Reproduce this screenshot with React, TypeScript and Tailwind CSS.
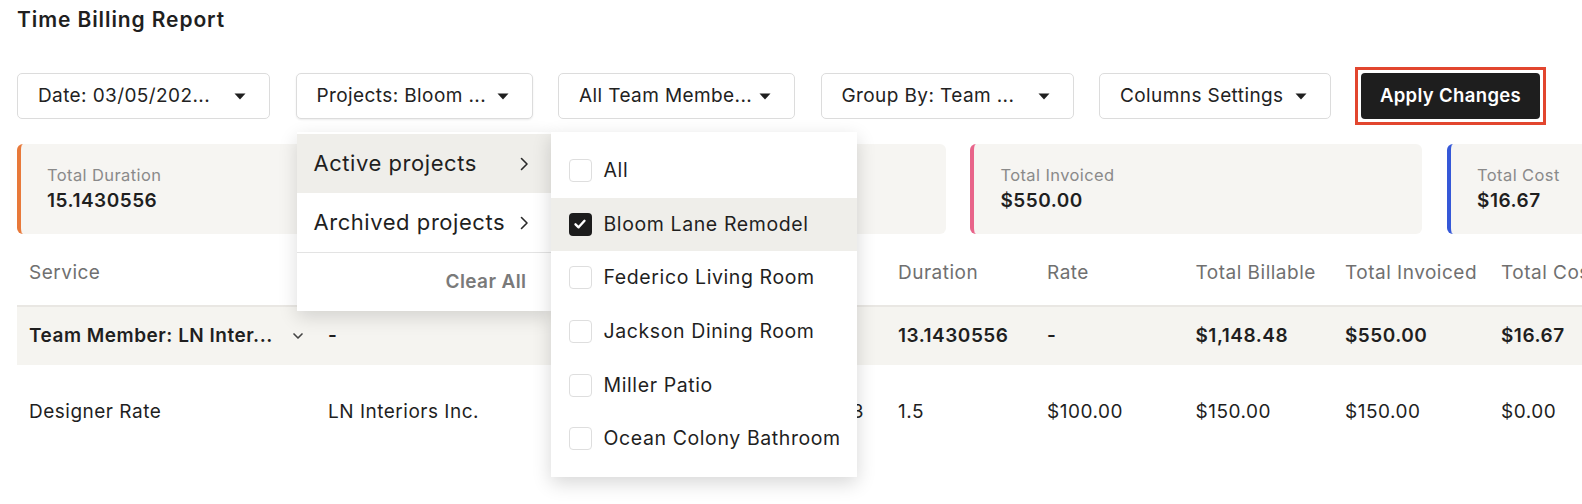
import React from "react";
import { ChevronDown } from "lucide-react";

function Caret() {
  return (
    <svg width="12" height="7" viewBox="0 0 12 7" className="shrink-0">
      <path d="M0.5 0.5 L11.5 0.5 L6 6.5 Z" fill="#1f1f1f" />
    </svg>
  );
}

function RightChev() {
  return (
    <svg width="9" height="14" viewBox="0 0 9 14" className="shrink-0">
      <path d="M1.5 1.5 L7 7 L1.5 12.5" stroke="#2a2a2a" strokeWidth="1.6" fill="none" strokeLinecap="round" strokeLinejoin="round" />
    </svg>
  );
}

function FilterBtn({ label, className }: { label: string; className: string }) {
  return (
    <div
      className={`flex h-[46px] items-center justify-between rounded-[5px] border border-[#dcdcdc] bg-white pl-[20px] pr-[23px] text-[19px] tracking-[0.4px] text-[#222] ${className}`}
    >
      <span className="whitespace-nowrap">{label}</span>
      <Caret />
    </div>
  );
}

function Checkbox({ checked }: { checked?: boolean }) {
  if (checked) {
    return (
      <div className="flex h-[23px] w-[23px] shrink-0 items-center justify-center rounded-[4px] bg-[#1c1c1c]">
        <svg width="14" height="14" viewBox="0 0 14 14">
          <path d="M2.5 7.3 L5.6 10.3 L11.5 3.8" stroke="white" strokeWidth="2.4" fill="none" strokeLinecap="round" strokeLinejoin="round" />
        </svg>
      </div>
    );
  }
  return <div className="h-[23px] w-[23px] shrink-0 rounded-[4px] border border-[#dedede] bg-white" />;
}

function Card({ label, value, bar }: { label: string; value: string; bar: string }) {
  return (
    <div className={`flex h-[90px] w-[452px] shrink-0 flex-col justify-center rounded-[6px] border-l-[4px] bg-[#f6f5f2] pl-[26px] ${bar}`}>
      <div className="text-[16.5px] leading-[21px] tracking-[0.4px] text-[#8a8a8a]">{label}</div>
      <div className="mt-[3px] text-[19px] font-semibold leading-[24px] tracking-[0.5px] text-[#1f1f1f]">{value}</div>
    </div>
  );
}

const cols = "grid grid-cols-[299px_300px_135px_135px_149px_148.5px_149.5px_156px_150px]";

export default function App() {
  return (
    <div className="relative h-[504px] w-[1582px] overflow-hidden bg-white font-['Inter',sans-serif] text-[#1f1f1f]">
      <div className="pl-[17px]">
        <h1 className="pt-[8px] text-[21px] font-semibold leading-[24px] tracking-[0.9px] text-[#1f1f1f]">Time Billing Report</h1>

        <div className="mt-[35px] flex items-center gap-[25.5px]">
          <FilterBtn label="Date: 03/05/202..." className="w-[253px]" />
          <div className="relative">
            <FilterBtn label="Projects: Bloom ..." className="w-[237px] shadow-[0_1px_2px_rgba(0,0,0,0.08)]" />
            {/* Projects menu */}
            <div className="absolute left-[1px] top-[59px] z-20 w-[254px] bg-white pt-[2px] shadow-[0_6px_18px_rgba(0,0,0,0.14)]">
              <div className="flex h-[59px] items-center justify-between bg-[#efeeea] pl-[17px] pr-[22px] text-[22px] tracking-[0.55px] text-[#1f1f1f]">
                <span>Active projects</span>
                <RightChev />
              </div>
              <div className="flex h-[59px] items-center justify-between pl-[17px] pr-[22px] text-[22px] tracking-[0.55px] text-[#1f1f1f]">
                <span className="whitespace-nowrap">Archived projects</span>
                <RightChev />
              </div>
              <div className="flex h-[59px] items-center justify-end border-t border-[#e3e3e3] pr-[24px] text-[19px] font-semibold tracking-[0.4px] text-[#7a7a7a]">
                Clear All
              </div>
              {/* Submenu */}
              <div className="absolute left-[254px] top-0 w-[306px] bg-white pb-[11px] pt-[12px] shadow-[0_6px_18px_rgba(0,0,0,0.16)]">
                {[
                  { t: "All" },
                  { t: "Bloom Lane Remodel", c: true },
                  { t: "Federico Living Room" },
                  { t: "Jackson Dining Room" },
                  { t: "Miller Patio" },
                  { t: "Ocean Colony Bathroom" },
                ].map((it) => (
                  <div
                    key={it.t}
                    className={`flex h-[53.6px] items-center gap-[12px] pl-[18px] text-[19.5px] tracking-[0.6px] text-[#1f1f1f] ${it.c ? "bg-[#efeeea]" : ""}`}
                  >
                    <Checkbox checked={it.c} />
                    <span className="whitespace-nowrap">{it.t}</span>
                  </div>
                ))}
              </div>
            </div>
          </div>
          <FilterBtn label="All Team Membe..." className="w-[237px]" />
          <FilterBtn label="Group By: Team ..." className="w-[253px]" />
          <FilterBtn label="Columns Settings" className="w-[232px]" />
          <div className="ml-[-1.5px] border-[3px] border-[#e2462f] p-[3px]">
            <div className="flex h-[46px] w-[179px] items-center justify-center rounded-[4px] bg-[#1e1e1e] text-[18.5px] font-semibold tracking-[0.35px] text-white">
              Apply Changes
            </div>
          </div>
        </div>

        <div className="mt-[19px] flex gap-[24.7px]">
          <Card label="Total Duration" value="15.1430556" bar="border-[#e8793a]" />
          <Card label="Total Billable" value="$1,148.48" bar="border-[#3c9a6a]" />
          <Card label="Total Invoiced" value="$550.00" bar="border-[#e8648a]" />
          <Card label="Total Cost" value="$16.67" bar="border-[#3558d8]" />
        </div>

        <div className="mt-[16px] w-max text-[19px] tracking-[0.5px]">
          <div className={`${cols} h-[57px] items-center border-b-[2px] border-[#e9e7e3] pb-[8px] text-[#707070]`}>
            {["Service", "Team Member", "Date", "Billed", "Duration", "Rate", "Total Billable", "Total Invoiced", "Total Cost"].map((h) => (
              <div key={h} className="whitespace-nowrap pl-[12px]">{h}</div>
            ))}
          </div>
          <div className={`${cols} h-[58px] items-center bg-[#f5f4f0] font-semibold text-[#1f1f1f]`}>
            <div className="flex items-center justify-between pl-[12px] pr-[10px]">
              <span className="whitespace-nowrap">Team Member: LN Inter...</span>
              <ChevronDown size={16} strokeWidth={2.5} className="text-[#444]" />
            </div>
            <div className="pl-[12px]">-</div>
            <div className="pl-[12px]">-</div>
            <div className="pl-[12px]">-</div>
            <div className="pl-[12px]">13.1430556</div>
            <div className="pl-[12px]">-</div>
            <div className="pl-[12px]">$1,148.48</div>
            <div className="pl-[12px]">$550.00</div>
            <div className="pl-[12px]">$16.67</div>
          </div>
          <div className={`${cols} h-[95px] items-center text-[#1f1f1f]`}>
            <div className="pl-[12px]">Designer Rate</div>
            <div className="pl-[12px]">LN Interiors Inc.</div>
            <div className="pl-[12px]">1.5</div>
            <div className="whitespace-nowrap pr-[22px] text-right">03/05/2023</div>
            <div className="pl-[12px]">1.5</div>
            <div className="pl-[12px]">$100.00</div>
            <div className="pl-[12px]">$150.00</div>
            <div className="pl-[12px]">$150.00</div>
            <div className="pl-[12px]">$0.00</div>
          </div>
        </div>
      </div>
    </div>
  );
}
